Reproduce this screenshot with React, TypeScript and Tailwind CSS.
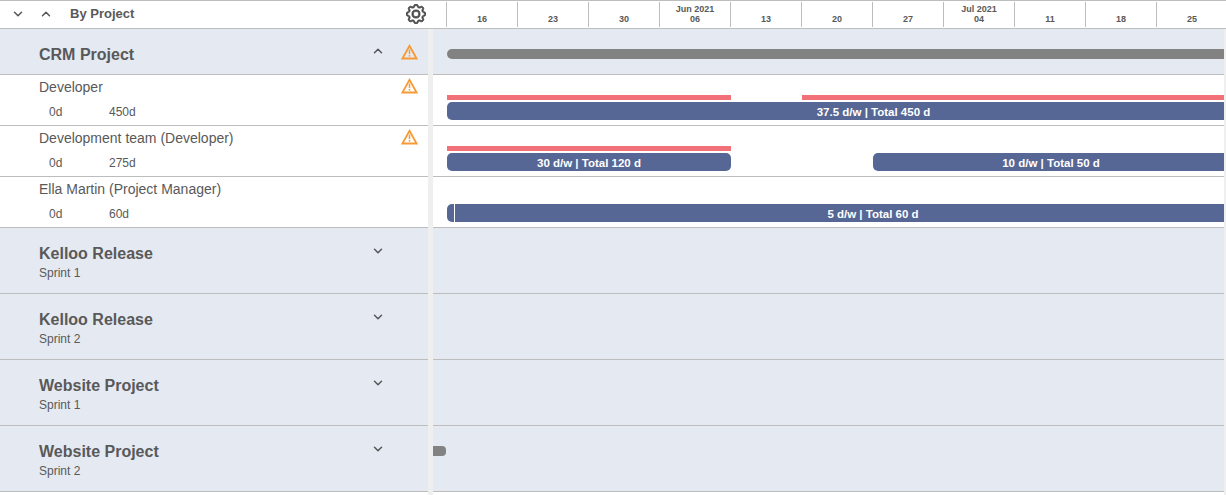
import { ChevronDown, ChevronUp } from "lucide-react";
import { BsGear } from "react-icons/bs";
import type { ReactNode } from "react";

const ticks = [
    { day: "16" },
    { day: "23" },
    { day: "30" },
    { day: "06", month: "Jun 2021" },
    { day: "13" },
    { day: "20" },
    { day: "27" },
    { day: "04", month: "Jul 2021" },
    { day: "11" },
    { day: "18" },
    { day: "25" },
];

function Warn() {
    return (
        <svg className="w-[17px] h-[16px] block" viewBox="0 0 17 16" fill="none">
            <path d="M8.5 1.8 L15.6 14.5 L1.4 14.5 Z" stroke="#f59a35" strokeWidth="1.8" strokeLinejoin="miter" />
            <path d="M8.5 5.5 V10" stroke="#f59a35" strokeWidth="1.5" />
            <path d="M8.5 11 V12.6" stroke="#f59a35" strokeWidth="1.5" />
        </svg>
    );
}

function Row({ height, tint, left, children }: { height: string; tint?: boolean; left: ReactNode; children?: ReactNode }) {
    return (
        <div className={`flex ${height}`}>
            <div className={`w-[428px] shrink-0 border-b border-[#bdbdbd] relative ${tint ? "bg-[#e5e9f1]" : "bg-white"}`}>{left}</div>
            <div className="w-[5px] shrink-0 bg-[#efefef]" />
            <div className={`flex-1 min-w-0 border-b border-[#bdbdbd] overflow-hidden pl-[14px] ${tint ? "bg-[#e5e9f1]" : "bg-white"}`}>{children}</div>
        </div>
    );
}

function Bar({ width, text, className }: { width: string; text?: string; className?: string }) {
    return (
        <div className={`h-[18px] bg-[#566796] text-white text-[11.5px] font-bold leading-[20px] text-center shrink-0 ${width} ${className ?? ""}`}>
            {text}
        </div>
    );
}

function ResourceRow({ name, a, b, warn, children }: { name: string; a: string; b: string; warn?: boolean; children: ReactNode }) {
    return (
        <Row
            height="h-[51px]"
            left={
                <div className="pl-[39px] pt-[3px] text-[#595959]">
                    <div className="flex items-center justify-between pr-[10px] h-[19px]">
                        <span className="text-sm leading-[19px]">{name}</span>
                        {warn && <span className="-mt-[4px]"><Warn /></span>}
                    </div>
                    <div className="flex text-xs mt-[8px] pl-[10px] leading-[14px]">
                        <span className="w-[60px]">{a}</span>
                        <span>{b}</span>
                    </div>
                </div>
            }
        >
            {children}
        </Row>
    );
}

function GroupRow({ name, sprint, children }: { name: string; sprint: string; children?: ReactNode }) {
    return (
        <Row
            height="h-[66px]"
            tint
            left={
                <div className="flex justify-between pl-[39px] pr-[43px] pt-[16px] text-[#595959]">
                    <div>
                        <div className="text-base font-bold leading-[20px]">{name}</div>
                        <div className="text-xs leading-[16px] mt-[1px]">{sprint}</div>
                    </div>
                    <ChevronDown className="w-[14px] h-[14px] text-[#555]" strokeWidth={2.5} />
                </div>
            }
        >
            {children}
        </Row>
    );
}

export default function App() {
    return (
        <div className="w-[1226px] h-[495px] bg-white overflow-hidden font-['Liberation_Sans',Arial,sans-serif]">
            <div className="flex h-[29px] border-y border-[#bdbdbd] text-[#595959]">
                <div className="w-[446px] shrink-0 flex items-center pb-[2px]">
                    <ChevronDown className="w-[14px] h-[14px] ml-[11px] text-[#555]" strokeWidth={2.5} />
                    <ChevronUp className="w-[14px] h-[14px] ml-[14px] text-[#555]" strokeWidth={2.5} />
                    <span className="text-[13px] font-bold ml-[17px]">By Project</span>
                    <BsGear className="w-[20px] h-[20px] ml-[272px] text-[#4a4a4a] stroke-[#4a4a4a] stroke-[0.7px]" />
                </div>
                <div className="flex-1 flex overflow-hidden">
                    {ticks.map((t) => (
                        <div key={t.day} className="w-[71px] shrink-0 border-l border-[#bdbdbd] text-center text-[9px] font-bold leading-[10px] mt-[1px] mb-[1px] flex flex-col justify-end pb-[3px]">
                            {t.month && <div>{t.month}</div>}
                            <div>{t.day}</div>
                        </div>
                    ))}
                </div>
            </div>
            <div className="flex">
                <div className="w-[1224px] shrink-0">
                    <Row
                        height="h-[46px]"
                        tint
                        left={
                            <div className="flex items-center h-full pl-[39px] pr-[10px] text-[#595959]">
                                <span className="text-base font-bold flex-1 mt-[6px]">CRM Project</span>
                                <ChevronUp className="w-[14px] h-[14px] mb-[1px] text-[#555]" strokeWidth={2.5} />
                                <span className="ml-[16px] mt-[1px]"><Warn /></span>
                            </div>
                        }
                    >
                        <div className="h-[10px] mt-[20px] bg-[#828282] rounded-l-[5px]" />
                    </Row>
                    <ResourceRow name="Developer" a="0d" b="450d" warn>
                        <div className="flex gap-[71px] mt-[20px]">
                            <div className="h-[5px] w-[284px] shrink-0 bg-[#f27178]" />
                            <div className="h-[5px] flex-1 bg-[#f27178]" />
                        </div>
                        <Bar width="w-[853px]" text="37.5 d/w | Total 450 d" className="rounded-l-[5px] mt-[2px]" />
                    </ResourceRow>
                    <ResourceRow name="Development team (Developer)" a="0d" b="275d" warn>
                        <div className="h-[5px] w-[284px] bg-[#f27178] mt-[20px]" />
                        <div className="flex gap-[142px] mt-[2px]">
                            <Bar width="w-[284px]" text="30 d/w | Total 120 d" className="rounded-[5px]" />
                            <Bar width="w-[356px]" text="10 d/w | Total 50 d" className="rounded-l-[5px]" />
                        </div>
                    </ResourceRow>
                    <ResourceRow name="Ella Martin (Project Manager)" a="0d" b="60d">
                        <div className="flex gap-px mt-[27px]">
                            <Bar width="w-[7px]" className="rounded-l-[5px]" />
                            <Bar width="w-[836px]" text="5 d/w | Total 60 d" />
                        </div>
                    </ResourceRow>
                    <GroupRow name="Kelloo Release" sprint="Sprint 1" />
                    <GroupRow name="Kelloo Release" sprint="Sprint 2" />
                    <GroupRow name="Website Project" sprint="Sprint 1" />
                    <GroupRow name="Website Project" sprint="Sprint 2">
                        <div className="h-[10px] w-[13px] -ml-[14px] mt-[20px] bg-[#828282] rounded-r-[4px]" />
                    </GroupRow>
                    <div className="ml-[428px] w-[5px] h-[3px] bg-[#efefef]" />
                </div>
                <div className="w-[2px] bg-[#efefef]" />
            </div>
        </div>
    );
}
